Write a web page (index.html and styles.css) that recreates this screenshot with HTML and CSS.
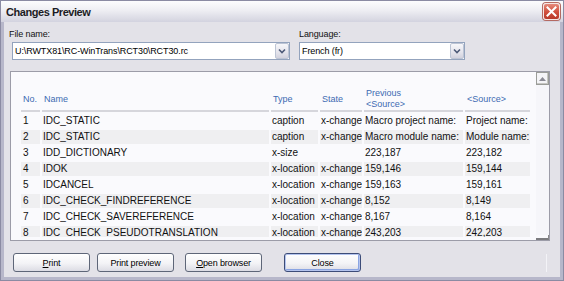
FILE: index.html
```html
<!DOCTYPE html>
<html lang="en">
<head>
  <meta charset="UTF-8" />
  <title>Changes Preview</title>
  <link rel="stylesheet" href="styles.css">
</head>
<body>
  <div class="window">
    <div class="titlebar">
      <span class="title">Changes Preview</span>
      <span class="close-btn">
        <svg width="11" height="11" viewBox="0 0 11 11"><path d="M1.5 1.5 L9.5 9.5 M9.5 1.5 L1.5 9.5" stroke="#fff" stroke-width="2" stroke-linecap="square"/></svg>
      </span>
    </div>

    <div class="client">
      <div class="fields">
        <div class="field file-field">
          <div class="label">File name:</div>
          <div class="combo file-combo">
            <span class="combo-text">U:\RWTX81\RC-WinTrans\RCT30\RCT30.rc</span>
            <span class="combo-arrow"><svg width="8" height="6" viewBox="0 0 8 6"><path d="M1 1.5 L4 4.5 L7 1.5" fill="none" stroke="#4d5a78" stroke-width="1.6"/></svg></span>
          </div>
        </div>
        <div class="field lang-field">
          <div class="label">Language:</div>
          <div class="combo lang-combo">
            <span class="combo-text">French (fr)</span>
            <span class="combo-arrow"><svg width="8" height="6" viewBox="0 0 8 6"><path d="M1 1.5 L4 4.5 L7 1.5" fill="none" stroke="#4d5a78" stroke-width="1.6"/></svg></span>
          </div>
        </div>
      </div>

      <div class="list">
        <div class="list-content">
          <table class="changes">
            <colgroup>
              <col style="width:19px"><col style="width:227px"><col style="width:47px">
              <col style="width:42px"><col style="width:99px"><col style="width:65px">
            </colgroup>
            <thead>
              <tr>
                <th>No.</th><th>Name</th><th>Type</th><th>State</th>
                <th>Previous<br>&lt;Source&gt;</th><th>&lt;Source&gt;</th>
              </tr>
            </thead>
            <tbody>
              <tr><td>1</td><td>IDC_STATIC</td><td>caption</td><td>x-change</td><td>Macro project name:</td><td>Project name:</td></tr>
              <tr><td>2</td><td>IDC_STATIC</td><td>caption</td><td>x-change</td><td>Macro module name:</td><td>Module name:</td></tr>
              <tr><td>3</td><td>IDD_DICTIONARY</td><td>x-size</td><td></td><td>223,187</td><td>223,182</td></tr>
              <tr><td>4</td><td>IDOK</td><td>x-location</td><td>x-change</td><td>159,146</td><td>159,144</td></tr>
              <tr><td>5</td><td>IDCANCEL</td><td>x-location</td><td>x-change</td><td>159,163</td><td>159,161</td></tr>
              <tr><td>6</td><td>IDC_CHECK_FINDREFERENCE</td><td>x-location</td><td>x-change</td><td>8,152</td><td>8,149</td></tr>
              <tr><td>7</td><td>IDC_CHECK_SAVEREFERENCE</td><td>x-location</td><td>x-change</td><td>8,167</td><td>8,164</td></tr>
              <tr><td>8</td><td>IDC_CHECK_PSEUDOTRANSLATION</td><td>x-location</td><td>x-change</td><td>243,203</td><td>242,203</td></tr>
            </tbody>
          </table>
        </div>
        <div class="vscroll">
          <div class="scroll-up"><svg width="7" height="4" viewBox="0 0 7 4"><path d="M0 4 L3.5 0 L7 4 Z" fill="#8a8a94"/></svg></div>
          <div class="scroll-track"></div>
          <div class="scroll-end"></div>
        </div>
      </div>

      <div class="buttons">
        <button class="btn"><u>P</u>rint</button>
        <button class="btn btn-preview">Print preview</button>
        <button class="btn btn-browser"><u>O</u>pen browser</button>
        <button class="btn btn-default btn-close">Close</button>
        <span class="grip"></span>
      </div>
    </div>
  </div>
</body>
</html>
```

FILE: styles.css
```css
* {
  margin: 0;
  padding: 0;
  box-sizing: border-box;
}

body {
  font-family: 'Liberation Sans', Arial, sans-serif;
  background: #ffffff;
}

.window {
  width: 564px;
  height: 281px;
  border: 1px solid #8b8ba3;
  background: #b7b7ca;
  display: flex;
  flex-direction: column;
}

/* title bar */
.titlebar {
  height: 21px;
  display: flex;
  align-items: center;
  justify-content: space-between;
  padding: 0 3px 0 5px;
  background: linear-gradient(#fdfdfe, #eeeef3 45%, #d3d3df);
}

.title {
  font-size: 11px;
  font-weight: bold;
  letter-spacing: -0.45px;
  color: #1c1c24;
}

.close-btn {
  width: 17px;
  height: 17px;
  border: 1px solid #f4e6e4;
  border-radius: 3px;
  background: linear-gradient(#e58a7c, #cf4d3b 55%, #b83a2a);
  display: flex;
  align-items: center;
  justify-content: center;
  box-shadow: 0 0 0 1px #b46a62;
}

/* client area */
.client {
  flex: 1;
  margin: 0 3px 3px;
  background: #e3e2e8;
  padding-top: 7px;
  display: flex;
  flex-direction: column;
}

.fields {
  display: flex;
  padding-left: 5px;
}

.file-field {
  width: 290px;
}

.label {
  font-size: 9px;
  line-height: 11px;
  letter-spacing: -0.1px;
  color: #111;
  margin-bottom: 2px;
}

.combo {
  height: 18px;
  border: 1px solid #93a3bd;
  background: #fff;
  display: flex;
  align-items: center;
  justify-content: space-between;
}

.file-combo {
  width: 278px;
  margin-left: 3px;
}

.lang-combo {
  width: 166px;
}

.combo-text {
  font-size: 9px;
  letter-spacing: -0.1px;
  padding-left: 2px;
  color: #000;
  white-space: nowrap;
}

.combo-arrow {
  width: 14px;
  height: 16px;
  border: 1px solid #bcc4d4;
  border-radius: 2px;
  background: linear-gradient(#f7f7fa, #e4e4ec 60%, #d2d2de);
  display: flex;
  align-items: center;
  justify-content: center;
}

/* list */
.list {
  margin: 11px 0 0 6px;
  width: 540px;
  height: 170px;
  border: 1px solid #9c9ca8;
  background: #fafafd;
  display: flex;
}

.list-content {
  flex: 1;
  height: 165px;
  overflow: hidden;
  padding: 14px 0 0 8px;
}

.changes {
  table-layout: fixed;
  width: 513px;
  border-collapse: separate;
  border-spacing: 2px;
  font-size: 10px;
  color: #111;
}

.changes th {
  height: 24px;
  font-size: 9px;
  line-height: 11px;
  font-weight: normal;
  color: #3d6ab2;
  text-align: left;
  vertical-align: middle;
  padding-left: 2px;
  border-bottom: 2px solid #d6d6dc;
  white-space: nowrap;
}

.changes td {
  height: 14px;
  line-height: 14px;
  padding: 0 0 0 1px;
  white-space: nowrap;
  overflow: hidden;
}

.changes td:first-child {
  padding-left: 2px;
}

.changes tbody tr:nth-child(even) td {
  background: #efeff1;
}

.vscroll {
  width: 13px;
  display: flex;
  flex-direction: column;
}

.scroll-up {
  height: 13px;
  border: 1px solid #9a9c98;
  box-shadow: inset -1px -1px #c6c6c2;
  background: #f4f4f7;
  display: flex;
  align-items: center;
  justify-content: center;
}

.scroll-track {
  flex: 1;
  background: #f6f6fa;
}

.scroll-end {
  height: 5px;
  border-right: 1px solid #8a8a8c;
  border-bottom: 2px solid #7c7c80;
}

/* buttons */
.buttons {
  margin-top: 12px;
  padding-left: 9px;
  display: flex;
  align-items: center;
}

.btn {
  width: 77px;
  height: 19px;
  border: 1px solid #5e6678;
  border-radius: 3px;
  background: linear-gradient(#ffffff, #f3f3f6 55%, #dcdce4);
  font-family: 'Liberation Sans', Arial, sans-serif;
  font-size: 9px;
  letter-spacing: -0.15px;
  color: #000;
}

.btn-preview {
  margin-left: 7px;
}

.btn-browser {
  margin-left: 11px;
}

.btn-close {
  margin-left: 22px;
}

.btn-default {
  border-color: #3c4c78;
  box-shadow: inset 0 0 0 1px #b4c4ee, inset -1px -1px 0 1px #8aa4e2;
}

.grip {
  width: 1px;
  height: 18px;
  margin-left: auto;
  margin-right: 13px;
  background: #f3f3f7;
}
```
